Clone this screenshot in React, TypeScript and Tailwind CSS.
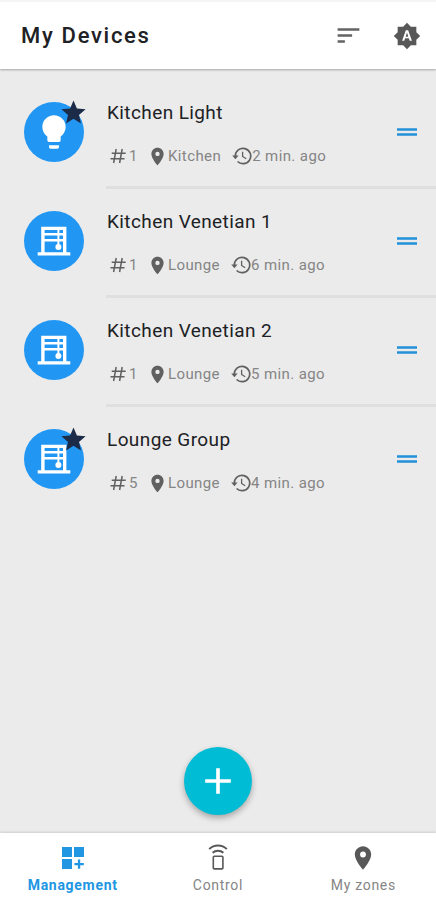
import { MdAdd, MdBrightnessAuto, MdDragHandle, MdLightbulb, MdPlace, MdSort, MdStar } from 'react-icons/md'

interface Device {
  name: string
  type: 'light' | 'blind'
  count: number
  zone: string
  updated: string
  favorite?: boolean
}

const DEVICES: Device[] = [
  { name: 'Kitchen Light', type: 'light', count: 1, zone: 'Kitchen', updated: '2 min. ago', favorite: true },
  { name: 'Kitchen Venetian 1', type: 'blind', count: 1, zone: 'Lounge', updated: '6 min. ago' },
  { name: 'Kitchen Venetian 2', type: 'blind', count: 1, zone: 'Lounge', updated: '5 min. ago' },
  { name: 'Lounge Group', type: 'blind', count: 5, zone: 'Lounge', updated: '4 min. ago', favorite: true },
]

function BlindIcon() {
  return (
    <svg width="34" height="32" viewBox="0 0 34 32" fill="none" stroke="currentColor">
      <path d="M5.9 28V3.4h21.8V28" strokeWidth="3.4" />
      <path d="M.7 28.8h32.6" strokeWidth="3.2" />
      <path d="M6 9.2h21M6 15.2h21" strokeWidth="2.5" />
      <path d="M21.4 4v19" strokeWidth="2" />
      <circle cx="21.4" cy="22" r="3" fill="currentColor" stroke="none" />
    </svg>
  )
}

function HashIcon() {
  return (
    <svg width="16" height="16" viewBox="0 0 16 16" fill="none" stroke="currentColor" strokeWidth="1.5">
      <path d="M6.2 1 3.6 15M12.2 1 9.6 15M1.7 5.2h14M.5 10.8h14" />
    </svg>
  )
}

function HistoryIcon() {
  return (
    <svg width="20" height="18" viewBox="0 0 20 18" fill="none" stroke="currentColor" strokeWidth="1.7">
      <path d="M3.3 9A7.7 7.7 0 1 1 5.6 14.5" />
      <path d="M.2 8.4h6.4L3.4 12.2z" fill="currentColor" stroke="none" />
      <path d="M10.6 4.8v4.7l3.6 2.3" strokeWidth="1.3" />
    </svg>
  )
}

function DashboardIcon() {
  return (
    <svg width="22" height="22" viewBox="0 0 22 22" fill="currentColor">
      <path d="M0 0h10v10H0zM12 0h10v10H12zM0 12h10v10H0zM15.9 12.5h2.3v3.4h3.6v2.3h-3.6v3.6h-2.3v-3.6h-3.5v-2.3h3.5z" />
    </svg>
  )
}

function RemoteIcon() {
  return (
    <svg width="20" height="28" viewBox="0 0 20 28" fill="none" stroke="currentColor" strokeWidth="1.6">
      <rect x="5.3" y="12.3" width="9.6" height="12.6" rx="1" />
      <path d="M1.2 5.1a12.5 12.5 0 0 1 17.6 0M4.6 8.8a7.8 7.8 0 0 1 10.8 0" strokeWidth="2" />
    </svg>
  )
}

function DeviceRow({ device, last }: { device: Device; last: boolean }) {
  return (
    <li className="flex h-[109px] pl-6">
      <div className="relative mt-[22px] flex h-[60px] w-[60px] shrink-0 items-center justify-center rounded-full bg-[#2196f3] text-white">
        {device.type === 'light' ? <MdLightbulb size={40} /> : <BlindIcon />}
        {device.favorite && <MdStar size={29} className="absolute -top-[4px] left-[35px] text-[#1b2b48]" />}
      </div>

      <div className={`ml-[22px] flex flex-1 border-b-[3px] ${last ? 'border-transparent' : 'border-[#dfdfdf]'}`}>
        <div className="flex-1 pl-px pt-[21px]">
          <p className="text-[19px] leading-6 tracking-[0.4px] text-[#202124]">{device.name}</p>
          <div className="mt-[21px] flex h-5 items-center text-[15px] tracking-[0.4px] text-[#858585]">
            <span className="ml-[3px] flex w-[40px] items-center gap-[3px]">
              <span className="text-[#606060]"><HashIcon /></span>
              {device.count}
            </span>
            <MdPlace size={21} className="-ml-[3px] shrink-0 text-[#606060]" />
            <span>{device.zone}</span>
            <span className="ml-[11px] text-[#606060]"><HistoryIcon /></span>
            <span>{device.updated}</span>
          </div>
        </div>
        <MdDragHandle size={30} className="mr-[14px] mt-[37px] text-[#2391d9]" />
      </div>
    </li>
  )
}

export default function App() {
  return (
    <div className="flex h-[900px] w-[436px] flex-col overflow-hidden bg-[#ebebeb] font-['Roboto',sans-serif]">
      <header className="z-10 flex h-[69px] shrink-0 items-center border-t-2 border-[#f5f5f5] bg-white pl-[21px] pr-[15px] shadow-[0_1px_2px_rgba(0,0,0,0.3)]">
        <h1 className="flex-1 text-[22px] font-medium tracking-[1.7px] text-[#202124]">My Devices</h1>
        <MdSort size={29} className="mr-[30px] text-[#646464]" />
        <MdBrightnessAuto size={28} className="text-[#585858]" />
      </header>

      <main className="flex flex-1 flex-col">
        <ul className="pt-[11px]">
          {DEVICES.map((d, i) => (
            <DeviceRow key={d.name} device={d} last={i === DEVICES.length - 1} />
          ))}
        </ul>
        <button className="mx-auto mb-[18px] mt-auto flex h-[68px] w-[68px] items-center justify-center rounded-full bg-[#00bcd4] text-white shadow-[0_3px_6px_rgba(0,0,0,0.3)]">
          <MdAdd size={44} />
        </button>
      </main>

      <nav className="flex h-[67px] shrink-0 bg-white text-[14px] tracking-[0.7px] text-[#858585] shadow-[0_-1px_2px_rgba(0,0,0,0.12)]">
        <a className="flex flex-1 flex-col items-center font-bold text-[#2196e3]">
          <span className="flex h-[42px] items-center pt-[8px]"><DashboardIcon /></span>
          Management
        </a>
        <a className="flex flex-1 flex-col items-center">
          <span className="flex h-[42px] items-center pt-[8px] text-[#585858]"><RemoteIcon /></span>
          Control
        </a>
        <a className="flex flex-1 flex-col items-center">
          <span className="flex h-[42px] items-center pt-[8px] text-[#585858]"><MdPlace size={28} /></span>
          My zones
        </a>
      </nav>
    </div>
  )
}
